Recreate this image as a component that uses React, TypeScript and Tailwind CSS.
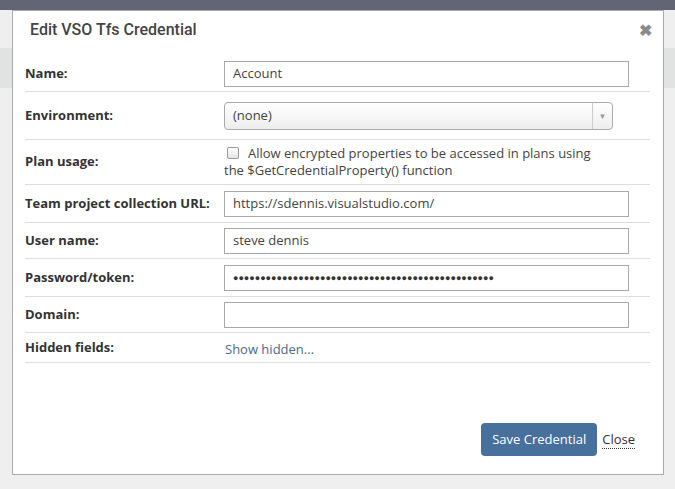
import React from "react";

const body = { fontFamily: '"Open Sans", "Liberation Sans", sans-serif' };

function Row({
  label,
  children,
  className = "",
}: {
  label: string;
  children: React.ReactNode;
  className?: string;
}) {
  return (
    <div className={`flex items-center border-b border-[#dddddd] ${className}`}>
      <div className="w-[199px] shrink-0 text-[13px] font-bold text-[#333]">{label}</div>
      <div className="flex-1">{children}</div>
    </div>
  );
}

function TextInput({ value, password }: { value: string; password?: boolean }) {
  return (
    <div className="flex h-[26px] w-[405px] items-center border border-[#a9a9a9] bg-white px-[8px] text-[13px] text-[#444]">
      {password ? (
        <span className="text-[9px] tracking-[0px] text-[#333]">{value}</span>
      ) : (
        value
      )}
    </div>
  );
}

export default function App() {
  return (
    <div className="relative h-[489px] w-[675px] overflow-hidden bg-[#efefef]" style={body}>
      <div className="h-[10px] bg-[#626674]" />
      <div className="mt-[38px] h-[40px] bg-[#e1e3e3]" />

      <div className="absolute left-[12px] top-[10px] flex h-[465px] w-[652px] flex-col border border-[#aaaaaa] bg-white">
        <div className="flex h-[38px] items-center justify-between pl-[17px] pr-[11px]">
          <span
            className="text-[16px] font-medium text-[#444]"
            style={{ fontFamily: 'Roboto, "Liberation Sans", sans-serif' }}
          >
            Edit VSO Tfs Credential
          </span>
          <span className="text-[16px] font-bold leading-none text-[#8a8a8a]">✖</span>
        </div>

        <div className="ml-[12px] mr-[13px] mt-[7px]">
          <Row label="Name:" className="h-[36px]">
            <TextInput value="Account" />
          </Row>
          <Row label="Environment:" className="h-[48px]">
            <div className="flex h-[28px] w-[389px] items-center justify-between rounded-[4px] border border-[#aaaaaa] bg-gradient-to-b from-white to-[#eeeeee] pl-[8px] text-[13px] text-[#444]">
              <span>(none)</span>
              <span className="flex h-full w-[20px] items-center justify-center border-l border-[#cccccc] text-[8px] text-[#999]">
                ▼
              </span>
            </div>
          </Row>
          <Row label="Plan usage:" className="h-[45px]">
            <div className="w-[386px] text-[13px] leading-[17px] text-[#444]">
              <span className="mr-[9px] ml-[3px] inline-block h-[12px] w-[12px] translate-y-[1px] rounded-[2px] border border-[#999] bg-gradient-to-b from-white to-[#e6e6e6] align-baseline" />
              Allow encrypted properties to be accessed in plans using the $GetCredentialProperty() function
            </div>
          </Row>
          <Row label="Team project collection URL:" className="h-[38px]">
            <TextInput value="https://sdennis.visualstudio.com/" />
          </Row>
          <Row label="User name:" className="h-[36px]">
            <TextInput value="steve dennis" />
          </Row>
          <Row label="Password/token:" className="h-[38px]">
            <TextInput value={"●".repeat(48)} password />
          </Row>
          <Row label="Domain:" className="h-[36px]">
            <TextInput value="" />
          </Row>
          <Row label="Hidden fields:" className="h-[30px]">
            <span className="pl-[1px] text-[13px] text-[#4d6a8a]">Show hidden...</span>
          </Row>
        </div>

        <div className="mt-auto mb-[18px] flex items-center justify-end gap-[5px] pr-[28px]">
          <button className="h-[33px] w-[116px] rounded-[4px] bg-[#48709c] text-[13px] text-white">
            Save Credential
          </button>
          <span className="border-b border-dotted border-[#333] text-[13px] leading-[17px] text-[#333]">
            Close
          </span>
        </div>
      </div>
    </div>
  );
}
